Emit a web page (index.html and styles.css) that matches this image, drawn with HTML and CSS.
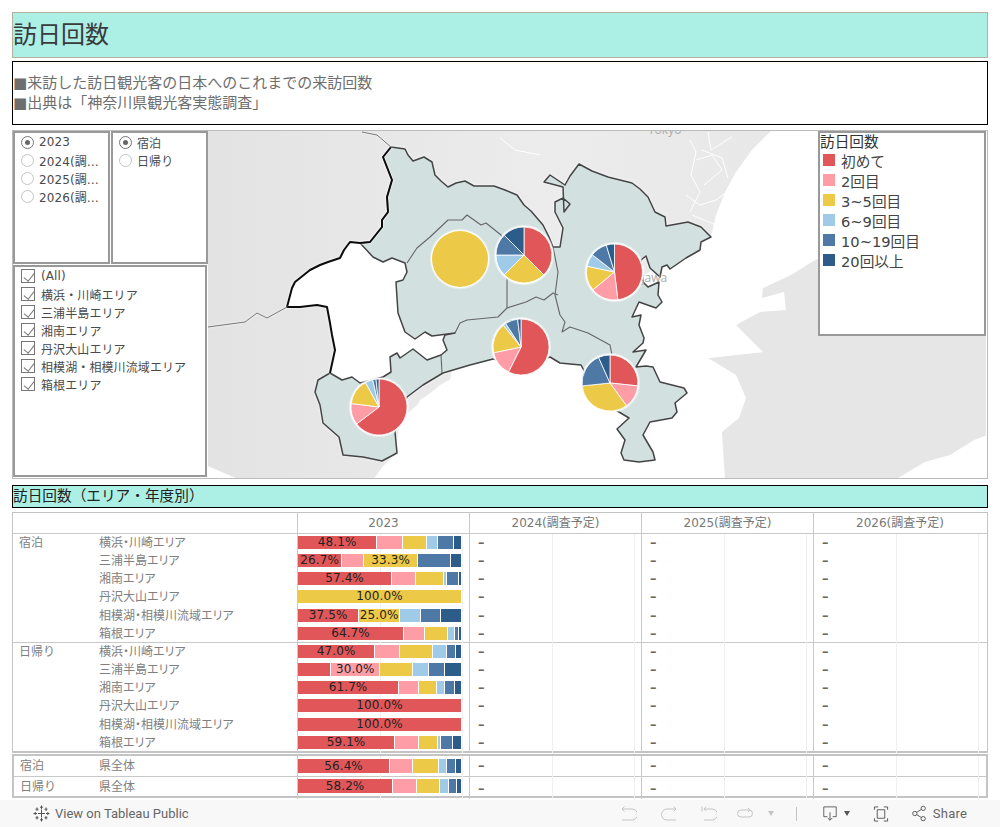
FILE: index.html
```html
<!DOCTYPE html>
<html lang="ja">
<head>
<meta charset="utf-8">
<title>訪日回数</title>
<link rel="stylesheet" href="styles.css">
</head>
<body>
<main class="dashboard">
  <h1 class="title">訪日回数</h1>
  <div class="desc">
    <p>■来訪した訪日観光客の日本へのこれまでの来訪回数</p>
    <p>■出典は「神奈川県観光客実態調査」</p>
  </div>

  <section class="map-panel">
    <svg class="map" viewBox="13 131 973 347" aria-label="神奈川県の地図">
      <defs>
        <linearGradient id="land" x1="0" x2="1" y1="0" y2="0">
          <stop offset="0" stop-color="#e3e3e3"/>
          <stop offset="0.6" stop-color="#ececec"/>
          <stop offset="1" stop-color="#e8e8e8"/>
        </linearGradient>
      </defs>
      <polygon class="land" points="208,130 772,130 752,150 736,172 726,190 716,215 711,237 600,300 440,385 400,420 395,455 383,466 373,480 240,480 208,466"/>
      <polygon class="land-east" points="815,260 791,275 763,288 762,298 784,292 786,310 760,312 736,325 763,352 708,358 736,375 746,398 739,418 722,432 725,480 898,478 925,462 950,455 974,440 987,435 987,200"/>
      <polygon class="hole" points="330,373 335,350 330,323 327,307 317,305 287,307 292,288 295,282 310,270 320,265 340,258 350,242 360,243 373,257 383,262 392,258 405,263 407,272 403,280 396,282 397,298 398,313 405,332 415,339 425,332 432,336 455,333 445,335 443,340 447,350 441,355 427,360 413,349 400,358 397,353 390,357 391,372 383,377 360,383 352,377 342,380"/>
      <polygon class="hole" points="420,345 460,330 450,380 420,400 380,480 480,480 640,480 720,480 708,358 763,352 660,300 600,340 500,362"/>
      <polygon class="hole" points="712,240 772,130 987,130 987,200 815,260 763,288 736,325 700,330 650,330"/>
      <g class="roads">
        <polyline points="690,140 696,152 691,175 700,192 690,212"/>
        <polyline points="696,160 712,155 722,170 704,185"/>
        <polyline points="702,150 722,158 728,178"/>
        <polyline points="686,195 700,205 716,200 730,190"/>
        <polyline points="708,132 711,150 732,137"/>
        <polyline points="500,138 515,150 540,155"/>
        <polyline points="692,215 716,225 720,233"/>
      </g>
      <text class="place" x="648" y="134">Tokyo</text>
      <polygon class="pref" points="391,147 405,149 408,155 413,161 424,157 432,162 435,175 441,181 448,187 456,183 465,181 474,186 481,186 494,186 505,190 517,195 524,205 531,211 543,225 549,237 553,247 560,247 563,228 555,212 555,202 563,198 570,204 564,212 563,187 544,182 550,175 565,185 570,176 579,164 592,171 608,177 632,183 640,189 648,197 655,212 665,217 666,226 688,222 701,227 711,237 701,242 700,250 686,258 670,269 667,265 662,267 660,277 650,268 646,256 641,260 643,282 648,287 659,282 658,295 662,302 656,308 639,302 632,317 641,315 639,325 644,338 643,343 633,352 646,350 636,367 646,366 653,367 660,382 684,388 687,393 675,403 677,412 672,418 650,422 643,435 653,452 655,460 639,462 624,460 621,453 625,440 617,429 629,418 619,412 600,400 581,365 570,364 560,363 550,357 525,366 493,359 470,365 443,373 423,385 407,397 395,432 397,453 382,461 363,457 343,455 339,437 323,423 320,405 315,392 318,380 330,373 342,380 352,377 360,383 383,377 391,372 390,357 397,353 400,358 413,349 427,360 441,355 447,350 443,340 445,335 455,333 432,336 425,332 415,339 405,332 398,313 397,298 396,282 403,280 407,272 405,263 392,258 383,262 373,257 360,243 370,242 382,227 382,220 388,212 387,197 392,180 383,157"/>
      <text class="place" x="610" y="282">Kanagawa</text>
      <g class="inner">
        <polyline points="407,263 417,248 430,237 448,220 462,220 467,215 481,225 486,223 501,235 508,250 507,282 507,308 498,317 467,320 460,323 455,333"/>
        <polyline points="507,308 526,302 536,297 544,300 553,293 558,295"/>
        <polyline points="553,247 558,272 555,295 560,315 565,322 562,332 570,327 588,333 610,345 612,355"/>
        <polyline points="441,355 442,373"/>
      </g>
      <polyline class="bold-line" points="330,373 335,350 332,335 330,323 327,307 317,305 300,307 287,307 292,288 295,282 310,270 320,265 328,262 340,258 344,250 350,242 360,243 370,242 382,227 382,220 388,212 387,197 392,180 383,157 391,147"/>
      <polyline class="thin-border" points="287,307 267,318 257,313 245,322 208,327"/>
      <polyline class="thin-border" points="362,132 377,135 391,147"/>

      <g transform="translate(460 259)">
        <circle class="halo" r="29"/>
        <circle class="s3" r="28"/>
      </g>
      <g class="pie" transform="translate(524 255)">
        <circle class="halo" r="29"/>
        <path class="s1" d="M0 0L0 -28A28 28 0 0 1 19.8 19.8Z"/>
        <path class="s3" d="M0 0L19.8 19.8A28 28 0 0 1 -19.8 19.8Z"/>
        <path class="s4" d="M0 0L-19.8 19.8A28 28 0 0 1 -28 0Z"/>
        <path class="s5" d="M0 0L-28 0A28 28 0 0 1 -19.8 -19.8Z"/>
        <path class="s6" d="M0 0L-19.8 -19.8A28 28 0 0 1 0 -28Z"/>
      </g>
      <g class="pie" transform="translate(614.5 272)">
        <circle class="halo" r="29"/>
        <path class="s1" d="M0 0L0 -28A28 28 0 0 1 3.3 27.8Z"/>
        <path class="s2" d="M0 0L3.3 27.8A28 28 0 0 1 -21.6 17.8Z"/>
        <path class="s3" d="M0 0L-21.6 17.8A28 28 0 0 1 -27.4 -5.8Z"/>
        <path class="s4" d="M0 0L-27.4 -5.8A28 28 0 0 1 -22.1 -17.2Z"/>
        <path class="s5" d="M0 0L-22.1 -17.2A28 28 0 0 1 -8.2 -26.8Z"/>
        <path class="s6" d="M0 0L-8.2 -26.8A28 28 0 0 1 0 -28Z"/>
      </g>
      <g class="pie" transform="translate(521 347)">
        <circle class="halo" r="29"/>
        <path class="s1" d="M0 0L0 -28A28 28 0 1 1 -12.5 25Z"/>
        <path class="s2" d="M0 0L-12.5 25A28 28 0 0 1 -27.4 5.8Z"/>
        <path class="s3" d="M0 0L-27.4 5.8A28 28 0 0 1 -17.6 -21.8Z"/>
        <path class="s4" d="M0 0L-17.6 -21.8A28 28 0 0 1 -15.3 -23.5Z"/>
        <path class="s5" d="M0 0L-15.3 -23.5A28 28 0 0 1 -3.4 -27.8Z"/>
        <path class="s6" d="M0 0L-3.4 -27.8A28 28 0 0 1 0 -28Z"/>
      </g>
      <g class="pie" transform="translate(610 383)">
        <circle class="halo" r="29"/>
        <path class="s1" d="M0 0L0 -28A28 28 0 0 1 27.8 2.9Z"/>
        <path class="s2" d="M0 0L27.8 2.9A28 28 0 0 1 16.5 22.7Z"/>
        <path class="s3" d="M0 0L16.5 22.7A28 28 0 0 1 -27.8 2.9Z"/>
        <path class="s5" d="M0 0L-27.8 2.9A28 28 0 0 1 -11.4 -25.6Z"/>
        <path class="s6" d="M0 0L-11.4 -25.6A28 28 0 0 1 0 -28Z"/>
      </g>
      <g class="pie" transform="translate(379 407)">
        <circle class="halo" r="29"/>
        <path class="s1" d="M0 0L0 -28A28 28 0 1 1 -22.3 16.9Z"/>
        <path class="s2" d="M0 0L-22.3 16.9A28 28 0 0 1 -27.8 -3.5Z"/>
        <path class="s3" d="M0 0L-27.8 -3.5A28 28 0 0 1 -13.5 -24.5Z"/>
        <path class="s4" d="M0 0L-13.5 -24.5A28 28 0 0 1 -6.3 -27.3Z"/>
        <path class="s5" d="M0 0L-6.3 -27.3A28 28 0 0 1 -3 -27.8Z"/>
        <path class="s6" d="M0 0L-3 -27.8A28 28 0 0 1 0 -28Z"/>
      </g>
    </svg>

    <div class="filters">
      <div class="filter-top">
        <ul class="filter-box">
          <li class="opt"><span class="radio on"></span><span class="opt-text">2023</span></li>
          <li class="opt"><span class="radio"></span><span class="opt-text">2024(調査予定)</span></li>
          <li class="opt"><span class="radio"></span><span class="opt-text">2025(調査予定)</span></li>
          <li class="opt"><span class="radio"></span><span class="opt-text">2026(調査予定)</span></li>
        </ul>
        <ul class="filter-box">
          <li class="opt"><span class="radio on"></span><span class="opt-text">宿泊</span></li>
          <li class="opt"><span class="radio"></span><span class="opt-text">日帰り</span></li>
        </ul>
      </div>
      <ul class="filter-box area-filter">
        <li class="opt"><span class="check"></span><span class="opt-text">(All)</span></li>
        <li class="opt"><span class="check"></span><span class="opt-text">横浜・川崎エリア</span></li>
        <li class="opt"><span class="check"></span><span class="opt-text">三浦半島エリア</span></li>
        <li class="opt"><span class="check"></span><span class="opt-text">湘南エリア</span></li>
        <li class="opt"><span class="check"></span><span class="opt-text">丹沢大山エリア</span></li>
        <li class="opt"><span class="check"></span><span class="opt-text">相模湖・相模川流域エリア</span></li>
        <li class="opt"><span class="check"></span><span class="opt-text">箱根エリア</span></li>
      </ul>
    </div>

    <aside class="legend">
      <h2 class="legend-title">訪日回数</h2>
      <ul class="legend-list">
        <li class="legend-item"><span class="swatch c1"></span>初めて</li>
        <li class="legend-item"><span class="swatch c2"></span>2回目</li>
        <li class="legend-item"><span class="swatch c3"></span>3~5回目</li>
        <li class="legend-item"><span class="swatch c4"></span>6~9回目</li>
        <li class="legend-item"><span class="swatch c5"></span>10~19回目</li>
        <li class="legend-item"><span class="swatch c6"></span>20回以上</li>
      </ul>
    </aside>
  </section>

  <h2 class="section-title">訪日回数（エリア・年度別）</h2>

  <section class="sheet">
    <div class="row head">
      <div></div><div></div>
      <div class="col-head">2023</div>
      <div class="col-head">2024(調査予定)</div>
      <div class="col-head">2025(調査予定)</div>
      <div class="col-head">2026(調査予定)</div>
    </div>
    <div class="group first">
      <div class="row"><div class="cat">宿泊</div><div class="area">横浜・川崎エリア</div>
        <div class="val"><div class="bar"><span class="seg c1" style="flex-grow:235">48.1%</span><span class="seg c2" style="flex-grow:75"></span><span class="seg c3" style="flex-grow:69"></span><span class="seg c4" style="flex-grow:30"></span><span class="seg c5" style="flex-grow:45"></span><span class="seg c6" style="flex-grow:21"></span></div></div>
        <div class="val null">–</div><div class="val null">–</div><div class="val null">–</div></div>
      <div class="row"><div class="cat"></div><div class="area">三浦半島エリア</div>
        <div class="val"><div class="bar"><span class="seg c1" style="flex-grow:130">26.7%</span><span class="seg c2" style="flex-grow:63"></span><span class="seg c3" style="flex-grow:159">33.3%</span><span class="seg c5" style="flex-grow:96"></span><span class="seg c6" style="flex-grow:30"></span></div></div>
        <div class="val null">–</div><div class="val null">–</div><div class="val null">–</div></div>
      <div class="row"><div class="cat"></div><div class="area">湘南エリア</div>
        <div class="val"><div class="bar"><span class="seg c1" style="flex-grow:280">57.4%</span><span class="seg c2" style="flex-grow:69"></span><span class="seg c3" style="flex-grow:81"></span><span class="seg c4" style="flex-grow:6"></span><span class="seg c5" style="flex-grow:33"></span><span class="seg c6" style="flex-grow:6"></span></div></div>
        <div class="val null">–</div><div class="val null">–</div><div class="val null">–</div></div>
      <div class="row"><div class="cat"></div><div class="area">丹沢大山エリア</div>
        <div class="val"><div class="bar"><span class="seg c3" style="flex-grow:490">100.0%</span></div></div>
        <div class="val null">–</div><div class="val null">–</div><div class="val null">–</div></div>
      <div class="row"><div class="cat"></div><div class="area">相模湖・相模川流域エリア</div>
        <div class="val"><div class="bar"><span class="seg c1" style="flex-grow:181">37.5%</span><span class="seg c3" style="flex-grow:120">25.0%</span><span class="seg c4" style="flex-grow:60"></span><span class="seg c5" style="flex-grow:57"></span><span class="seg c6" style="flex-grow:60"></span></div></div>
        <div class="val null">–</div><div class="val null">–</div><div class="val null">–</div></div>
      <div class="row"><div class="cat"></div><div class="area">箱根エリア</div>
        <div class="val"><div class="bar"><span class="seg c1" style="flex-grow:316">64.7%</span><span class="seg c2" style="flex-grow:60"></span><span class="seg c3" style="flex-grow:66"></span><span class="seg c4" style="flex-grow:18"></span><span class="seg c5" style="flex-grow:9"></span><span class="seg c6" style="flex-grow:6"></span></div></div>
        <div class="val null">–</div><div class="val null">–</div><div class="val null">–</div></div>
    </div>
    <div class="group">
      <div class="row"><div class="cat">日帰り</div><div class="area">横浜・川崎エリア</div>
        <div class="val"><div class="bar"><span class="seg c1" style="flex-grow:229">47.0%</span><span class="seg c2" style="flex-grow:72"></span><span class="seg c3" style="flex-grow:96"></span><span class="seg c4" style="flex-grow:39"></span><span class="seg c5" style="flex-grow:24"></span><span class="seg c6" style="flex-grow:15"></span></div></div>
        <div class="val null">–</div><div class="val null">–</div><div class="val null">–</div></div>
      <div class="row"><div class="cat"></div><div class="area">三浦半島エリア</div>
        <div class="val"><div class="bar"><span class="seg c1" style="flex-grow:97"></span><span class="seg c2" style="flex-grow:144">30.0%</span><span class="seg c3" style="flex-grow:96"></span><span class="seg c4" style="flex-grow:45"></span><span class="seg c5" style="flex-grow:45"></span><span class="seg c6" style="flex-grow:48"></span></div></div>
        <div class="val null">–</div><div class="val null">–</div><div class="val null">–</div></div>
      <div class="row"><div class="cat"></div><div class="area">湘南エリア</div>
        <div class="val"><div class="bar"><span class="seg c1" style="flex-grow:301">61.7%</span><span class="seg c2" style="flex-grow:57"></span><span class="seg c3" style="flex-grow:51"></span><span class="seg c4" style="flex-grow:21"></span><span class="seg c5" style="flex-grow:27"></span><span class="seg c6" style="flex-grow:18"></span></div></div>
        <div class="val null">–</div><div class="val null">–</div><div class="val null">–</div></div>
      <div class="row"><div class="cat"></div><div class="area">丹沢大山エリア</div>
        <div class="val"><div class="bar"><span class="seg c1" style="flex-grow:490">100.0%</span></div></div>
        <div class="val null">–</div><div class="val null">–</div><div class="val null">–</div></div>
      <div class="row"><div class="cat"></div><div class="area">相模湖・相模川流域エリア</div>
        <div class="val"><div class="bar"><span class="seg c1" style="flex-grow:490">100.0%</span></div></div>
        <div class="val null">–</div><div class="val null">–</div><div class="val null">–</div></div>
      <div class="row"><div class="cat"></div><div class="area">箱根エリア</div>
        <div class="val"><div class="bar"><span class="seg c1" style="flex-grow:289">59.1%</span><span class="seg c2" style="flex-grow:69"></span><span class="seg c3" style="flex-grow:54"></span><span class="seg c4" style="flex-grow:6"></span><span class="seg c5" style="flex-grow:33"></span><span class="seg c6" style="flex-grow:24"></span></div></div>
        <div class="val null">–</div><div class="val null">–</div><div class="val null">–</div></div>
    </div>
  </section>

  <section class="sheet-total">
    <div class="row total top"><div class="cat">宿泊</div><div class="area big">県全体</div>
      <div class="val"><div class="bar tall"><span class="seg c1" style="flex-grow:274">56.4%</span><span class="seg c2" style="flex-grow:66"></span><span class="seg c3" style="flex-grow:75"></span><span class="seg c4" style="flex-grow:21"></span><span class="seg c5" style="flex-grow:24"></span><span class="seg c6" style="flex-grow:15"></span></div></div>
      <div class="val null">–</div><div class="val null">–</div><div class="val null">–</div></div>
    <div class="row total"><div class="cat">日帰り</div><div class="area big">県全体</div>
      <div class="val"><div class="bar tall"><span class="seg c1" style="flex-grow:283">58.2%</span><span class="seg c2" style="flex-grow:69"></span><span class="seg c3" style="flex-grow:66"></span><span class="seg c4" style="flex-grow:24"></span><span class="seg c5" style="flex-grow:21"></span><span class="seg c6" style="flex-grow:12"></span></div></div>
      <div class="val null">–</div><div class="val null">–</div><div class="val null">–</div></div>
  </section>
</main>

<footer class="toolbar">
  <a class="public-link">
    <svg class="tb-logo" viewBox="0 0 17 17"><path d="M8.500 4.500v8M5 8.500h7M8.500 .500v3.500M7 2.200h3M8.500 13v3.500M7 14.800h3M.5 8.500h3.500M2.200 7v3M13 8.500h3.500M14.800 7v3M4 2.500v3.500M2.500 4.200h3M13 2.500v3.500M11.500 4.200h3M4 11v3.500M2.500 12.800h3M13 11v3.500M11.500 12.800h3"/></svg>
    <span>View on Tableau Public</span>
  </a>
  <div class="tools">
    <svg class="ic muted" viewBox="0 0 16 16"><path d="M1 3h10a5.500 5.500 0 0 1 0 11H1M3.500 .5L1 3l2.500 2.500"/></svg>
    <svg class="ic muted gap-24" viewBox="0 0 16 16"><path d="M15 3H6a5.500 5.500 0 0 0 0 11h9M12.500 .5L15 3l-2.500 2.500"/></svg>
    <svg class="ic muted gap-24" viewBox="0 0 16 16"><path d="M1 .5v5M3 3h8a5.500 5.500 0 0 1 0 11H3M5 .8L3 3l2 2.200"/></svg>
    <svg class="ic muted gap-20" viewBox="0 0 16 16"><path d="M13 4H4a3.500 3.500 0 0 0 0 7h8a3.500 3.500 0 0 0 0-7M11 2l2 2-2 2"/></svg>
    <span class="tri light gap-15"></span>
    <span class="sep"></span>
    <svg class="ic dark gap-25" viewBox="0 0 16 18"><path d="M5 12H1V1h14v11h-4M8 7v9M5.500 13.500L8 16l2.500-2.500"/></svg>
    <span class="tri gap-6"></span>
    <svg class="ic dark gap-23" viewBox="0 0 16 17"><path d="M1 4V1h4M11 1h4v3M15 13v3h-4M5 16H1v-3M4 4h8v9H4z"/></svg>
    <svg class="ic-share dark" viewBox="0 0 15 17"><circle cx="3" cy="8.500" r="2.300"/><circle cx="12" cy="3" r="2.300"/><circle cx="12" cy="14" r="2.300"/><path d="M5 7.300L10 4.200M5 9.700l5 3.100"/></svg>
    <span class="share">Share</span>
  </div>
</footer>
</body>
</html>
```

FILE: styles.css
```css
* { box-sizing: border-box; }
html, body { margin: 0; padding: 0; height: 100%; overflow: hidden; background: #fff; }
body { width: 1000px; height: 827px; font-family: "DejaVu Sans", "Noto Sans CJK JP", sans-serif; color: #333; }
p, h1, h2, ul { margin: 0; padding: 0; font-weight: 400; }
ul { list-style: none; }

.dashboard { height: 800px; padding: 12px 12px 0; }

.title { height: 46px; background: #acefe5; border: 1px solid #b5b0a0; font-size: 24px; line-height: 44px; color: #3a3a3a; }
.desc { margin-top: 3px; height: 64px; border: 1px solid #000; padding: 11px 0 0; font-size: 15px; line-height: 20px; color: #6e6e6e; }

.map-panel { position: relative; margin-top: 5px; height: 349px; border: 1px solid #bbb; background: #fff; }
.map { display: block; width: 973px; height: 347px; }
.land { fill: url(#land); }
.land-east { fill: #e6e6e6; }
.hole { fill: #fff; }
.roads polyline { fill: none; stroke: #fff; stroke-width: 1; }
.place { font: 12px "Open Sans", sans-serif; fill: #aaa; }
.pref { fill: #d2e0df; stroke: #444; stroke-width: 1.5; stroke-linejoin: round; filter: drop-shadow(0 0 1px #fff); }
.inner polyline { fill: none; stroke: #666; stroke-width: 1.1; stroke-linejoin: round; }
.bold-line { fill: none; stroke: #0c0c0c; stroke-width: 2; stroke-linejoin: round; filter: drop-shadow(0 0 1px #fff); }
.thin-border { fill: none; stroke: #777; stroke-width: 1; filter: drop-shadow(0 0 1px #fff); }
.halo { fill: #fff; stroke: rgba(255,255,255,.5); stroke-width: 2; }
.pie path { stroke: #fff; stroke-width: .8; }
.s1 { fill: #e15759; }
.s2 { fill: #ff9da7; }
.s3 { fill: #edc948; }
.s4 { fill: #a0cbe8; }
.s5 { fill: #4e79a7; }
.s6 { fill: #2b5c8a; }
.c1 { background: #e15759; }
.c2 { background: #ff9da7; }
.c3 { background: #edc948; }
.c4 { background: #a0cbe8; }
.c5 { background: #4e79a7; }
.c6 { background: #2b5c8a; }

.filters { position: absolute; left: 0; top: 0; width: 196px; display: flex; flex-direction: column; gap: 1px; }
.filter-top { display: flex; gap: 1px; height: 133px; }
.filter-top .filter-box { width: 97px; }
.filter-box { background: #fff; border: 2px solid #999; padding: 0 6px; font-size: 12px; color: #4a4a4a; }
.area-filter { width: 194px; height: 212px; padding-top: 0; }
.opt { display: flex; align-items: center; height: 18px; gap: 5px; }
.opt-text { white-space: nowrap; overflow: hidden; text-overflow: ellipsis; min-width: 0; letter-spacing: .1px; }
.radio { flex: none; width: 13px; height: 13px; border: 1px solid #c4c4c4; border-radius: 50%; background: #fff; position: relative; }
.radio.on { border-color: #777; }
.radio.on::after { content: ""; position: absolute; left: 3px; top: 3px; width: 5px; height: 5px; border-radius: 50%; background: #666; }
.check { flex: none; width: 14px; height: 14px; border: 1px solid #777; position: relative; margin-right: 1px; }
.check::after { content: ""; position: absolute; left: 4px; top: 1px; width: 5px; height: 9px; border: solid #777; border-width: 0 1px 1px 0; transform: rotate(38deg); }

.legend { position: absolute; right: 1px; top: 0; width: 168px; height: 205px; background: #fff; border: 2px solid #999; padding: 0; }
.legend-title { font-size: 14.67px; line-height: 17px; color: #333; }
.legend-list { margin-top: 0; }
.legend-item { display: flex; align-items: center; gap: 6px; height: 20px; font-size: 14.67px; color: #444; padding-left: 3px; white-space: nowrap; }
.swatch { flex: none; width: 12px; height: 12px; }

.section-title { margin-top: 6px; height: 23px; background: #acefe5; border: 1px solid #000; font-size: 14.67px; line-height: 20px; color: #222; }

.row { display: grid; grid-template-columns: 86px 198px 172px 172px 172px 173px; height: 18.17px; }
.sheet { margin-top: 4px; height: 241px; border: solid #c4c4c4; border-width: 1px 1px 2px; }
.head { height: 21px; border-bottom: 1px solid #c8c8c8; }
.col-head { border-left: 1px solid #c8c8c8; text-align: center; font-size: 12px; line-height: 21px; color: #777; }
.group { height: 108px; }
.group.first { height: 109px; border-bottom: 1px solid #c8c8c8; }
.cat { padding-left: 6px; font-size: 12px; line-height: 19px; color: #808080; }
.area { font-size: 12px; line-height: 19px; color: #808080; font-feature-settings: "palt"; white-space: nowrap; }
.area.big { font-feature-settings: normal; }
.val { border-left: 1px solid #c8c8c8; padding-top: 2px; background: linear-gradient(#f0f0f0, #f0f0f0) 82px 0 / 1px 100% no-repeat, linear-gradient(#f0f0f0, #f0f0f0) 164px 0 / 1px 100% no-repeat; }
.null { padding: 0 0 0 8px; font-size: 13px; font-weight: 700; line-height: 17px; color: #666; }
.bar { display: flex; gap: 1px; width: 163px; height: 13px; }
.bar.tall { height: 14px; }
.seg { flex: 1 1 0; min-width: 0; display: flex; justify-content: center; align-items: center; white-space: nowrap; font-size: 12px; line-height: 13px; color: #222; letter-spacing: .1px; }

.sheet-total { margin-top: 1px; height: 44px; border: 2px solid #c4c4c4; }
.total { grid-template-columns: 85px 198px 172px 172px 172px 172px; height: 20px; }
.total.top { border-bottom: 1px solid #c8c8c8; height: 21px; }
.total .val { padding-top: 3px; }
.total:not(.top) .val { padding-top: 2px; }
.total .null { padding-top: 0; padding-left: 8px; line-height: 20px; }
.total .cat, .total .area { line-height: 21px; }

.toolbar { height: 27px; background: #f8f8f8; display: flex; align-items: center; justify-content: space-between; padding: 0 33px; }
.public-link { display: flex; align-items: center; gap: 5px; font: 13px "Roboto", sans-serif; color: #666; }
.tb-logo { width: 17px; height: 17px; fill: none; stroke: #555; stroke-width: 1; }
.tools { display: flex; align-items: center; }
.ic { width: 16px; height: 16px; fill: none; stroke-width: 1; }
.ic-share { width: 14px; height: 17px; margin-left: 23px; fill: none; stroke-width: 1; }
.muted { stroke: #c4c4c4; }
.dark { stroke: #555; }
.gap-23 { margin-left: 23px; }
.gap-24 { margin-left: 24px; }
.gap-25 { margin-left: 25px; }
.gap-20 { margin-left: 20px; }
.gap-15 { margin-left: 15px; }
.gap-6 { margin-left: 6px; }
.tri { width: 0; height: 0; border: 3.5px solid transparent; border-top: 5px solid #555; border-bottom: 0; }
.tri.light { border-top-color: #c4c4c4; }
.sep { width: 1px; height: 14px; background: #c4c4c4; margin-left: 22px; }
.share { margin-left: 7px; font: 13px "Roboto", sans-serif; color: #666; letter-spacing: .2px; }
```
